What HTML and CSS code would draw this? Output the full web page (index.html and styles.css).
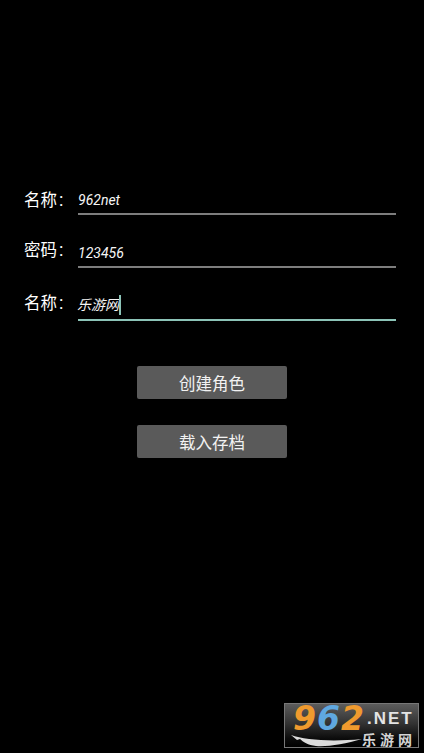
FILE: index.html
```html
<!DOCTYPE html>
<html lang="zh-CN">
<head>
    <meta charset="UTF-8">
    <meta name="viewport" content="width=device-width, initial-scale=1.0">
    <title>创建角色</title>
    <link rel="stylesheet" href="styles.css">
</head>
<body>
    <div class="form">
        <div class="row row-first">
            <span class="label">名称<span class="colon">:</span></span>
            <div class="field"><span class="value">962net</span></div>
        </div>
        <div class="row">
            <span class="label">密码<span class="colon">:</span></span>
            <div class="field"><span class="value">123456</span></div>
        </div>
        <div class="row">
            <span class="label">名称<span class="colon">:</span></span>
            <div class="field active"><span class="value">乐游网</span><span class="caret"></span></div>
        </div>
    </div>

    <div class="actions">
        <button>创建角色</button>
        <button>载入存档</button>
    </div>

    <div class="watermark">
        <svg class="swoosh" width="72" height="13" viewBox="0 0 72 13">
            <path d="M0 1 C14 6 40 8 71 5 C54 10 36 13 25 12 C17 11 12 8 9 5 L6 6 Z" fill="#dcdcdc"/>
        </svg>
        <div class="mark-top">
            <span class="mark-num"><span class="orange">9</span><span class="blue">6</span><span class="orange">2</span></span>
            <span class="mark-net">.NET</span>
        </div>
        <div class="mark-cn">乐游网</div>
    </div>
</body>
</html>
```

FILE: styles.css
```css
body {
    margin: 0;
    width: 424px;
    height: 753px;
    background: #000;
    color: #fff;
    font-family: Roboto, 'Noto Sans CJK SC', sans-serif;
    overflow: hidden;
    position: relative;
}

.form {
    padding: 164px 28px 0 24px;
}

.row {
    display: flex;
    height: 53px;
}

.label {
    width: 54px;
    padding-top: 21px;
    font-size: 16.5px;
    line-height: 24px;
}

.row-first .label {
    padding-top: 24px;
}

.colon {
    margin-left: 2px;
    font-size: 18px;
}

.field {
    flex: 1;
    height: 51px;
    border-bottom: 2px solid #7d7d7d;
    box-sizing: border-box;
    display: flex;
    align-items: flex-start;
}

.field.active {
    border-bottom-color: #8cc4b8;
}

.value {
    margin-top: 26px;
    font-size: 14px;
    line-height: 20px;
    font-style: italic;
    color: #f5f5f5;
}

.active .value {
    margin-top: 25px;
    margin-left: -1px;
}

.caret {
    width: 2px;
    height: 20px;
    margin-top: 25px;
    background: #8cc4b8;
}

.actions {
    display: flex;
    flex-direction: column;
    align-items: center;
    gap: 26px;
    margin-top: 43px;
}

button {
    width: 150px;
    height: 33px;
    padding: 0;
    border: none;
    border-radius: 2px;
    background: #5a5a5a;
    color: #f2f2f2;
    font-family: inherit;
    font-size: 16.5px;
}

.watermark {
    position: absolute;
    left: 284px;
    top: 703px;
    width: 133px;
    height: 43px;
    border: 1px solid #777;
    background: linear-gradient(180deg, #5c5c5c 0%, #333 45%, #0c0c0c 80%, #000 100%);
}

.mark-top {
    display: flex;
    height: 29px;
    padding-left: 8px;
}

.mark-num {
    font-family: 'DejaVu Sans', sans-serif;
    font-size: 33px;
    line-height: 29px;
    font-weight: bold;
    font-style: italic;
    letter-spacing: 1px;
}

.orange {
    color: #ef9a2e;
}

.blue {
    color: #5fa8e0;
}

.mark-net {
    margin: 6px 0 0 2px;
    font-family: 'Liberation Sans', sans-serif;
    font-size: 17px;
    line-height: 17px;
    font-weight: bold;
    letter-spacing: 2px;
    color: #e4e4e4;
}

.mark-cn {
    margin-left: 77px;
    font-size: 14px;
    line-height: 14px;
    font-weight: bold;
    letter-spacing: 4px;
    color: #d4d4d4;
}

.swoosh {
    position: absolute;
    left: 6px;
    top: 30px;
}
```
